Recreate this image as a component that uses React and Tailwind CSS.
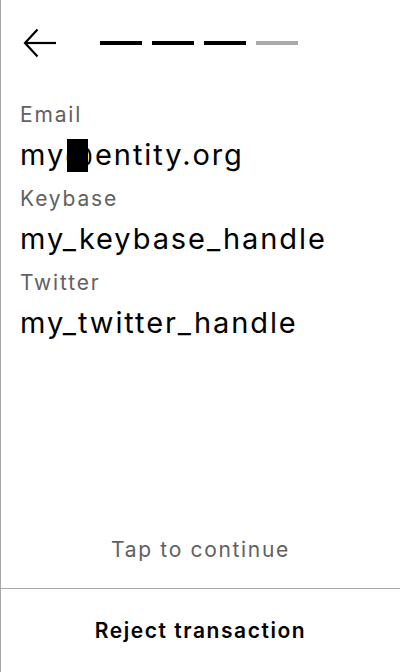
import React from "react";

const fields = [
  { label: "Email", value: "my@entity.org", redact: true },
  { label: "Keybase", value: "my_keybase_handle" },
  { label: "Twitter", value: "my_twitter_handle" },
];

export default function App() {
  return (
    <div className="flex h-[672px] w-[400px] flex-col border-l border-[#a8a8a8] bg-white font-['Inter',sans-serif] text-black">
      {/* header: back arrow + step bars */}
      <div className="flex h-[86px] items-center pl-[21px]">
        <svg width="36" height="30" viewBox="0 0 36 30" fill="none" stroke="#000" strokeWidth="2.2">
          <path d="M34 15H3" />
          <path d="M15.5 1.5L3 15L15.5 28.5" />
        </svg>
        <div className="ml-[42px] flex gap-[10px]">
          <div className="h-[4px] w-[42px] bg-black" />
          <div className="h-[4px] w-[42px] bg-black" />
          <div className="h-[4px] w-[42px] bg-black" />
          <div className="h-[4px] w-[42px] bg-[#aaaaaa]" />
        </div>
      </div>

      {/* identity fields */}
      <div className="flex flex-col gap-[4px] px-[19px] pt-[11px]">
        {fields.map((f) => (
          <div key={f.label}>
            <div className="text-[21px] leading-[36px] tracking-[0.088em] text-[#616161]">{f.label}</div>
            <div className="relative text-[29px] leading-[44px] tracking-[0.066em]">
              {f.value}
              {f.redact && <span className="absolute left-[47px] top-[6px] h-[33px] w-[21px] bg-black" />}
            </div>
          </div>
        ))}
      </div>

      <div className="flex-1" />
      <div className="pb-[24px] text-center text-[21px] leading-[28px] tracking-[0.08em] text-[#616161]">Tap to continue</div>

      <div className="flex h-[84px] items-center justify-center border-t border-[#a8a8a8]">
        <button className="text-[21px] font-semibold tracking-[0.074em]">Reject transaction</button>
      </div>
    </div>
  );
}
